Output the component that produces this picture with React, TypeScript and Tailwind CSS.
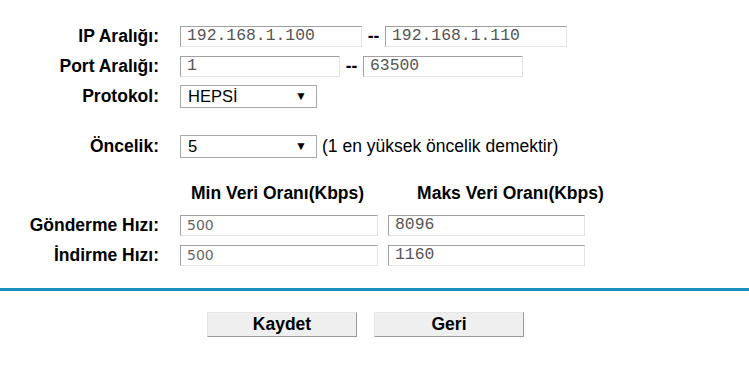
const field =
  "h-[21px] bg-white border border-t-[#a0a0a0] border-l-[#a0a0a0] border-r-[#e3e3e3] border-b-[#e3e3e3] px-[6px] outline-none text-[#555]";
const mono = { fontFamily: '"Liberation Mono", "Courier New", monospace' };
const sans = { fontFamily: '"DejaVu Sans", Verdana, sans-serif' };

function Label({ children }: { children: React.ReactNode }) {
  return <div className="w-[159px] shrink-0 text-right font-bold text-black">{children}</div>;
}

function Select({ value }: { value: string }) {
  return (
    <div className="ml-[21px] w-[137px] h-[23px] border border-[#a9a9a9] bg-white flex items-center justify-between pl-[7px] pr-[9px] text-[16.5px] text-black">
      <span>{value}</span>
      <span className="text-[12px] leading-none">▼</span>
    </div>
  );
}

export default function App() {
  return (
    <div
      className="w-[749px] h-[368px] bg-white text-[17.5px] overflow-hidden"
      style={{ fontFamily: '"Liberation Sans", Arial, sans-serif' }}
    >
      <div className="pt-[21px]">
        <div className="flex items-center h-[30px]">
          <Label>IP Aralığı:</Label>
          <input readOnly value="192.168.1.100" className={`${field} ml-[21px] w-[182px] text-[16.4px]`} style={mono} />
          <span className="w-[23px] text-center font-bold">--</span>
          <input readOnly value="192.168.1.110" className={`${field} w-[182px] text-[16.4px]`} style={mono} />
        </div>
        <div className="flex items-center h-[30px]">
          <Label>Port Aralığı:</Label>
          <input readOnly value="1" className={`${field} ml-[21px] w-[160px] text-[16.4px]`} style={mono} />
          <span className="w-[23px] text-center font-bold">--</span>
          <input readOnly value="63500" className={`${field} w-[160px] text-[16.4px]`} style={mono} />
        </div>
        <div className="flex items-center h-[30px]">
          <Label>Protokol:</Label>
          <Select value="HEPSİ" />
        </div>

        <div className="flex items-center h-[30px] mt-[20px]">
          <Label>Öncelik:</Label>
          <Select value="5" />
          <span className="ml-[5px] text-black">(1 en yüksek öncelik demektir)</span>
        </div>

        <div className="flex items-center h-[30px] mt-[17px] font-bold text-black">
          <span className="ml-[191px]">Min Veri Oranı(Kbps)</span>
          <span className="ml-[53px]">Maks Veri Oranı(Kbps)</span>
        </div>
        <div className="flex items-center h-[30px] mt-[2px]">
          <Label>Gönderme Hızı:</Label>
          <input readOnly value="500" className={`${field} ml-[21px] w-[198px] text-[14px] text-[#666]`} style={sans} />
          <input readOnly value="8096" className={`${field} ml-[10px] w-[197px] text-[16.4px]`} style={mono} />
        </div>
        <div className="flex items-center h-[30px]">
          <Label>İndirme Hızı:</Label>
          <input readOnly value="500" className={`${field} ml-[21px] w-[198px] text-[14px] text-[#666]`} style={sans} />
          <input readOnly value="1160" className={`${field} ml-[10px] w-[197px] text-[16.4px]`} style={mono} />
        </div>
      </div>

      <div className="mt-[18px] h-[3px] bg-[#1b8fbe]" />

      <div className="flex mt-[21px] pl-[207px] gap-[17px]">
        <button className="w-[150px] h-[25px] bg-[#efefef] border border-t-[#e6e6e6] border-l-[#e6e6e6] border-r-[#9a9a9a] border-b-[#9a9a9a] font-bold text-[17.5px] text-black leading-none">
          Kaydet
        </button>
        <button className="w-[150px] h-[25px] bg-[#efefef] border border-t-[#e6e6e6] border-l-[#e6e6e6] border-r-[#9a9a9a] border-b-[#9a9a9a] font-bold text-[17.5px] text-black leading-none">
          Geri
        </button>
      </div>
    </div>
  );
}
